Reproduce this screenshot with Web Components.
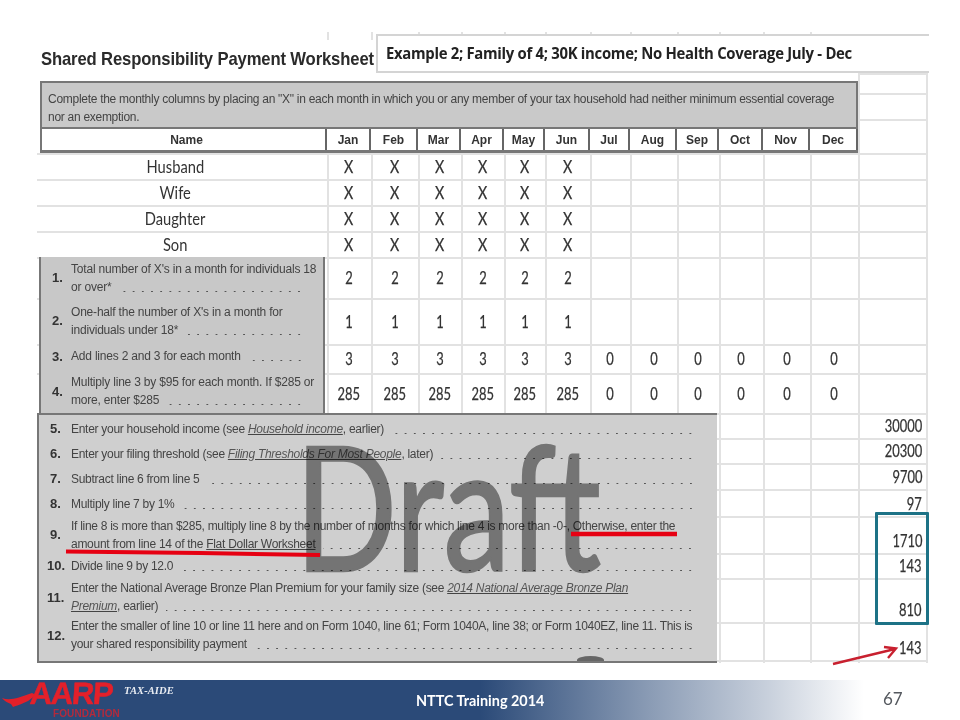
<!DOCTYPE html>
<html>
<head>
<meta charset="utf-8">
<style>
html, body { margin: 0; padding: 0; background: #fff; }
</style>
</head>
<body>
<tax-slide></tax-slide>
<script>
// one line of worksheet text, with the dot leader after it
class WsLead extends HTMLElement {
  constructor() {
    super();
    this.attachShadow({ mode: 'open' });
    this.shadowRoot.innerHTML = `
      <style>
        :host { display: flex; white-space: nowrap; height: var(--lh, 18px); line-height: var(--lh, 18px); }
        .dots { flex: 1; margin: 0 var(--dots-end, 0) 0 8px; min-width: 0;
          background: radial-gradient(circle at 50% 50%, #555 0, #555 .8px, transparent 1.1px) right 12px / 9.2px 3px repeat-x; }
      </style>
      <span><slot></slot></span><span class="dots"></span>`;
    if (this.hasAttribute('nodots')) this.shadowRoot.querySelector('.dots').remove();
  }
}
customElements.define('ws-lead', WsLead);

// numbered row in the grey panels
class WsLine extends HTMLElement {
  constructor() {
    super();
    this.attachShadow({ mode: 'open' });
    const n = this.getAttribute('n');
    this.shadowRoot.innerHTML = `
      <style>
        :host { display: flex; align-items: center; box-sizing: border-box; }
        .n { flex: 0 0 var(--num-w, 31px); padding-left: ${n.length > 1 ? 8 : 11}px; box-sizing: border-box; font-weight: bold; font-size: 13px; letter-spacing: 0; color: #333; }
        .b { flex: 1; min-width: 0; }
      </style>
      <div class="n"></div><div class="b"><slot></slot></div>`;
    this.shadowRoot.querySelector('.n').textContent = n + '.';
    this.style.height = this.getAttribute('h') + 'px';
  }
}
customElements.define('ws-line', WsLine);

// the pasted spreadsheet: irregular grid, grey panels on top, mark-ups over it
const YS = [32,34,40,73,81,93,119,127,153,179,205,231,257,298,344,373,413,438,463,489,516,553,578,622,660,663];
const XS = [37,40,327,371,376,418,461,504,545,590,630,677,716,719,763,810,858,926,929];
const MONTHS = ['Jan','Feb','Mar','Apr','May','Jun','Jul','Aug','Sep','Oct','Nov','Dec'];
const COLS = [327,371,418,461,504,545,590,630,677,719,763,810,858];

class TaxSheet extends HTMLElement {
  constructor() {
    super();
    this.attachShadow({ mode: 'open' });
    const area = (x1, y1, x2, y2) =>
      `grid-area:${YS.indexOf(y1) + 1}/${XS.indexOf(x1) + 1}/${YS.indexOf(y2) + 1}/${XS.indexOf(x2) + 1}`;

    // grid lines
    let lines = '';
    [327,371,418,461,504,545,590,630,677,719,763,810,858,926].forEach(x => {
      const top = x === 858 || x === 926 ? 73 : 32;
      lines += `<i class="vl" style="${area(x, top, XS[XS.indexOf(x) + 1], 663)}"></i>`;
    });
    [34,73,93,119].forEach(y => {
      lines += `<i class="hl" style="${area(858, y, 926, YS[YS.indexOf(y) + 1])}"></i>`;
    });
    [153,179,205,231,257,298,344,373,413,438,463,489,516,553,578,622,660].forEach(y => {
      lines += `<i class="hl" style="${area(37, y, 926, YS[YS.indexOf(y) + 1])}"></i>`;
    });

    // cells
    const cell = (text, i, y1, y2, cls) => `<div class="c ${cls || ''}" style="${area(COLS[i], y1, COLS[i + 1], y2)}"><span>${text}</span></div>`;
    let cells = '';
    const rowsX = [['Husband',153,179],['Wife',179,205],['Daughter',205,231],['Son',231,257]];
    rowsX.forEach(([name, y1, y2]) => {
      cells += `<div class="c name" style="${area(37, y1, 327, y2)}"><span>${name}</span></div>`;
      for (let i = 0; i < 6; i++) cells += cell('X', i, y1, y2, 'v x');
    });
    [['2',257,298,6],['1',298,344,6],['3',344,373,12],['285',373,413,12]].forEach(([v, y1, y2, n]) => {
      for (let i = 0; i < 12; i++) {
        if (i < 6) cells += cell(v, i, y1, y2, 'v');
        else if (n === 12) cells += cell('0', i, y1, y2, 'v');
      }
    });
    const heads = MONTHS.map((m, i) => cell(m, i, 127, 153, 'h')).join('');
    const rights = [['30000',413,438],['20300',438,463],['9700',463,489],['97',489,516],['1710',516,553],['143',553,578],['810',578,622],['143',622,660]]
      .map(([v, y1, y2]) => `<div class="r" style="${area(858, y1, 926, y2)}"><span>${v}</span></div>`).join('');

    this.shadowRoot.innerHTML = `
      <style>
        :host { display: block; position: relative; height: 680px; font-family: "Liberation Sans", Arial, sans-serif; color: #444; }
        .g { display: grid; filter: blur(.35px); padding: 32px 0 0 37px;
          grid-template-columns: ${XS.slice(1).map((x, i) => (x - XS[i]) + 'px').join(' ')};
          grid-template-rows: ${YS.slice(1).map((y, i) => (y - YS[i]) + 'px').join(' ')}; }
        .vl { border-left: 2px solid #e2e2e2; }
        .hl { border-top: 2px solid #e2e2e2; }
        .blank { background: #fff; }
        .title { background: #fff; font: bold 18.4px "Liberation Sans", sans-serif; color: #2b2b2b; white-space: nowrap; padding: 8px 0 0 4px; letter-spacing: -.15px; }
        .title span { display: inline-block; transform: scaleX(.905); transform-origin: left; }
        .ex { background: #fff; border: solid #d4d4d4; border-width: 2px 0 2px 2px; font: bold 16px "Open Sans", sans-serif; color: #222; padding-left: 8px; line-height: 34px; white-space: nowrap; letter-spacing: -.32px; }
        .ex span { display: inline-block; transform: scaleX(.93); transform-origin: left; }
        .note { background: #c9c9c9; border: 2px solid #777; border-bottom: 0; padding: 7px 0 0 6px; font-size: 12px; line-height: 18px; color: #444; white-space: nowrap; letter-spacing: -.28px; }
        .hrow { background: #fff; border: solid #777; border-width: 2px 2px 3px; }
        .c { display: flex; align-items: center; justify-content: center; }
        .c span { display: inline-block; }
        .c.h { font: bold 12px "Liberation Sans", sans-serif; color: #333; border-right: 2px solid #666; margin-bottom: 3px; margin-top: 2px; }
        .c.nameh { font: bold 12px "Liberation Sans", sans-serif; color: #333; border-right: 2px solid #666; padding-left: 6px; margin: 2px 0 3px 2px; }
        .c.v { font: 17px Lato, sans-serif; color: #333; -webkit-text-stroke: .25px #333; }
        .c.v span { transform: scaleX(.76); }
        .c.x span { transform: scaleX(.84); }
        .c.name { font: 17px Lato, sans-serif; color: #333; padding-right: 14px; }
        .c.name span { transform: scaleX(.865); }
        .r { display: flex; align-items: flex-end; justify-content: flex-end; font: 17px Lato, sans-serif; color: #333; -webkit-text-stroke: .25px #333; padding: 0 4px 2px 0; }
        .r span { display: inline-block; transform: scaleX(.76); transform-origin: right; }
        .p { background: #cfcfcf; font-size: 12px; color: #444; box-sizing: border-box; letter-spacing: -.2px; }
        .p1 { border: solid #777; border-width: 0 2px 0 2px; background: #c8c8c8; --dots-end: 19px; margin: 0 2px 0 2px; --num-w: 30px; }
        .p2 { border: solid #777; border-width: 2px 0 2px 2px; padding-top: 1px; --num-w: 32px; --dots-end: 22px; margin-right: -1px; letter-spacing: -.28px; }
        u i { color: #555; }
      </style>
      <div class="g">
        ${lines}
        <div class="blank" style="${area(376, 73, 858, 81)}"></div>
        <div class="title" style="${area(37, 40, 376, 81)}"><span>Shared Responsibility Payment Worksheet</span></div>
        <div class="ex" style="${area(376, 34, 929, 73)}"><span>Example 2; Family of 4; 30K income; No Health Coverage July - Dec</span></div>
        <div class="note" style="${area(40, 81, 858, 127)}">Complete the monthly columns by placing an "X" in each month in which you or any member of your tax household had neither minimum essential coverage<br>nor an exemption.</div>
        <div class="hrow" style="${area(40, 127, 858, 153)}"></div>
        <div class="c nameh" style="${area(40, 127, 327, 153)}"><span>Name</span></div>
        ${heads}
        ${cells}
        <div class="p p1" style="${area(37, 257, 327, 413)}">
          <ws-line n="1" h="41"><ws-lead nodots>Total number of X's in a month for individuals 18</ws-lead><ws-lead>or over*</ws-lead></ws-line>
          <ws-line n="2" h="45"><ws-lead nodots>One-half the number of X's in a month for</ws-lead><ws-lead>individuals under 18*</ws-lead></ws-line>
          <ws-line n="3" h="26"><ws-lead>Add lines 2 and 3 for each month</ws-lead></ws-line>
          <ws-line n="4" h="44"><ws-lead nodots>Multiply line 3 by $95 for each month. If $285 or</ws-lead><ws-lead>more, enter $285</ws-lead></ws-line>
        </div>
        <div class="p p2" style="${area(37, 413, 716, 663)}">
          <ws-line n="5" h="25"><ws-lead>Enter your household income (see <u><i>Household income</i></u>, earlier)</ws-lead></ws-line>
          <ws-line n="6" h="25"><ws-lead>Enter your filing threshold (see <u><i>Filing Thresholds For Most People</i></u>, later)</ws-lead></ws-line>
          <ws-line n="7" h="25"><ws-lead>Subtract line 6 from line 5</ws-lead></ws-line>
          <ws-line n="8" h="25"><ws-lead>Multiply line 7 by 1%</ws-lead></ws-line>
          <ws-line n="9" h="37"><ws-lead nodots>If line 8 is more than $285, multiply line 8 by the number of months for which line 4 is more than -0-, Otherwise, enter the</ws-lead><ws-lead>amount from line 14 of the <u>Flat Dollar Worksheet</u></ws-lead></ws-line>
          <ws-line n="10" h="25"><ws-lead>Divide line 9 by 12.0</ws-lead></ws-line>
          <ws-line n="11" h="38"><ws-lead nodots>Enter the National Average Bronze Plan Premium for your family size (see <u><i>2014 National Average Bronze Plan</i></u></ws-lead><ws-lead><u><i>Premium</i></u>, earlier)</ws-lead></ws-line>
          <ws-line n="12" h="38"><ws-lead nodots>Enter the smaller of line 10 or line 11 here and on Form 1040, line 61; Form 1040A, line 38; or Form 1040EZ, line 11. This is</ws-lead><ws-lead>your shared responsibility payment</ws-lead></ws-line>
        </div>
        ${rights}
      </div>
      <tax-marks></tax-marks>`;
  }
}
customElements.define('tax-sheet', TaxSheet);

// Draft stamp, red underlines, teal box and arrow lying over the sheet
class TaxMarks extends HTMLElement {
  constructor() {
    super();
    this.attachShadow({ mode: 'open' });
    this.shadowRoot.innerHTML = `
      <style>
        :host { position: absolute; inset: 0; display: block; pointer-events: none; }
        .draft { position: absolute; left: 295px; top: 402px; font: 172px/1.2 Lato, sans-serif; color: #8f8f8f; -webkit-text-stroke: 2.5px #8f8f8f; mix-blend-mode: multiply; filter: blur(.4px); transform: scaleX(.78); transform-origin: left; }
        .blob { position: absolute; left: 577px; top: 656px; width: 27px; height: 8px; border-radius: 50% 50% 0 0; background: #666; clip-path: inset(0 0 3px 0); }
        .teal { position: absolute; left: 875px; top: 512px; width: 54px; height: 113px; box-sizing: border-box; border: 3px solid #1d7286; border-radius: 1px; }
        svg { position: absolute; left: 0; top: 0; }
      </style>
      <div class="draft">Draft</div>
      <div class="blob"></div>
      <div class="teal"></div>
      <svg width="960" height="680" viewBox="0 0 960 680" fill="none">
        <path d="M66 551.5 L200 553 L320 555" stroke="#e60012" stroke-width="4"/>
        <path d="M571 534 H677" stroke="#e60012" stroke-width="4.5"/>
        <path d="M833 664 L895 649 M884 647 L896 648.5 L888 658" stroke="#c8202f" stroke-width="2.4"/>
      </svg>`;
  }
}
customElements.define('tax-marks', TaxMarks);

// blue footer band with the logo, training name and page number
class TaxFooter extends HTMLElement {
  constructor() {
    super();
    this.attachShadow({ mode: 'open' });
    this.shadowRoot.innerHTML = `
      <style>
        :host { display: flex; height: 40px; box-sizing: border-box;
          background: linear-gradient(90deg, #2b4a78 0, #2b4a78 50%, #8c9db6 68%, #c8d0dc 80%, #fff 90%); }
        .logo { position: relative; flex: 0 0 124px; height: 40px; }
        .logo svg { position: absolute; left: 2px; top: 12px; }
        .aarp { position: absolute; left: 30px; top: 0; font: bold 31px/28px "Liberation Sans", sans-serif; color: #e3202a; -webkit-text-stroke: .5px #e3202a; letter-spacing: -1.4px; transform: skewX(-4deg); }
        .fnd { position: absolute; left: 53px; top: 28px; font: bold 10px/12px "Liberation Sans", sans-serif; color: #b32a3c; letter-spacing: .1px; }
        .tax { flex: 0 0 292px; padding-top: 4px; font: italic bold 10.5px/14px "Liberation Serif", serif; color: #e8ecf2; letter-spacing: .1px; }
        .ttl { flex: 0 0 467px; padding-top: 12px; font: bold 14.4px/17px Lato, sans-serif; color: #fff; }
        .num { padding-top: 9px; font: 17px/20px Lato, sans-serif; color: #55595f; }
      </style>
      <div class="logo">
        <svg width="40" height="16" viewBox="0 0 40 16"><path d="M0 6 C8 9 16 6 30 1 L34 3 L26 9 C20 12 14 14 11 15 L9 12 C6 11 2 9 0 6 Z" fill="#e3202a"/></svg>
        <div class="aarp">AARP</div>
        <div class="fnd">FOUNDATION</div>
      </div>
      <div class="tax">TAX-AIDE</div>
      <div class="ttl">NTTC Training 2014</div>
      <div class="num">67</div>`;
  }
}
customElements.define('tax-footer', TaxFooter);

class TaxSlide extends HTMLElement {
  constructor() {
    super();
    this.attachShadow({ mode: 'open' });
    this.shadowRoot.innerHTML = `
      <style>
        :host { display: flex; flex-direction: column; width: 960px; height: 720px; overflow: hidden; background: #fff; }
      </style>
      <tax-sheet></tax-sheet>
      <tax-footer></tax-footer>`;
  }
}
customElements.define('tax-slide', TaxSlide);
</script>
</body>
</html>
